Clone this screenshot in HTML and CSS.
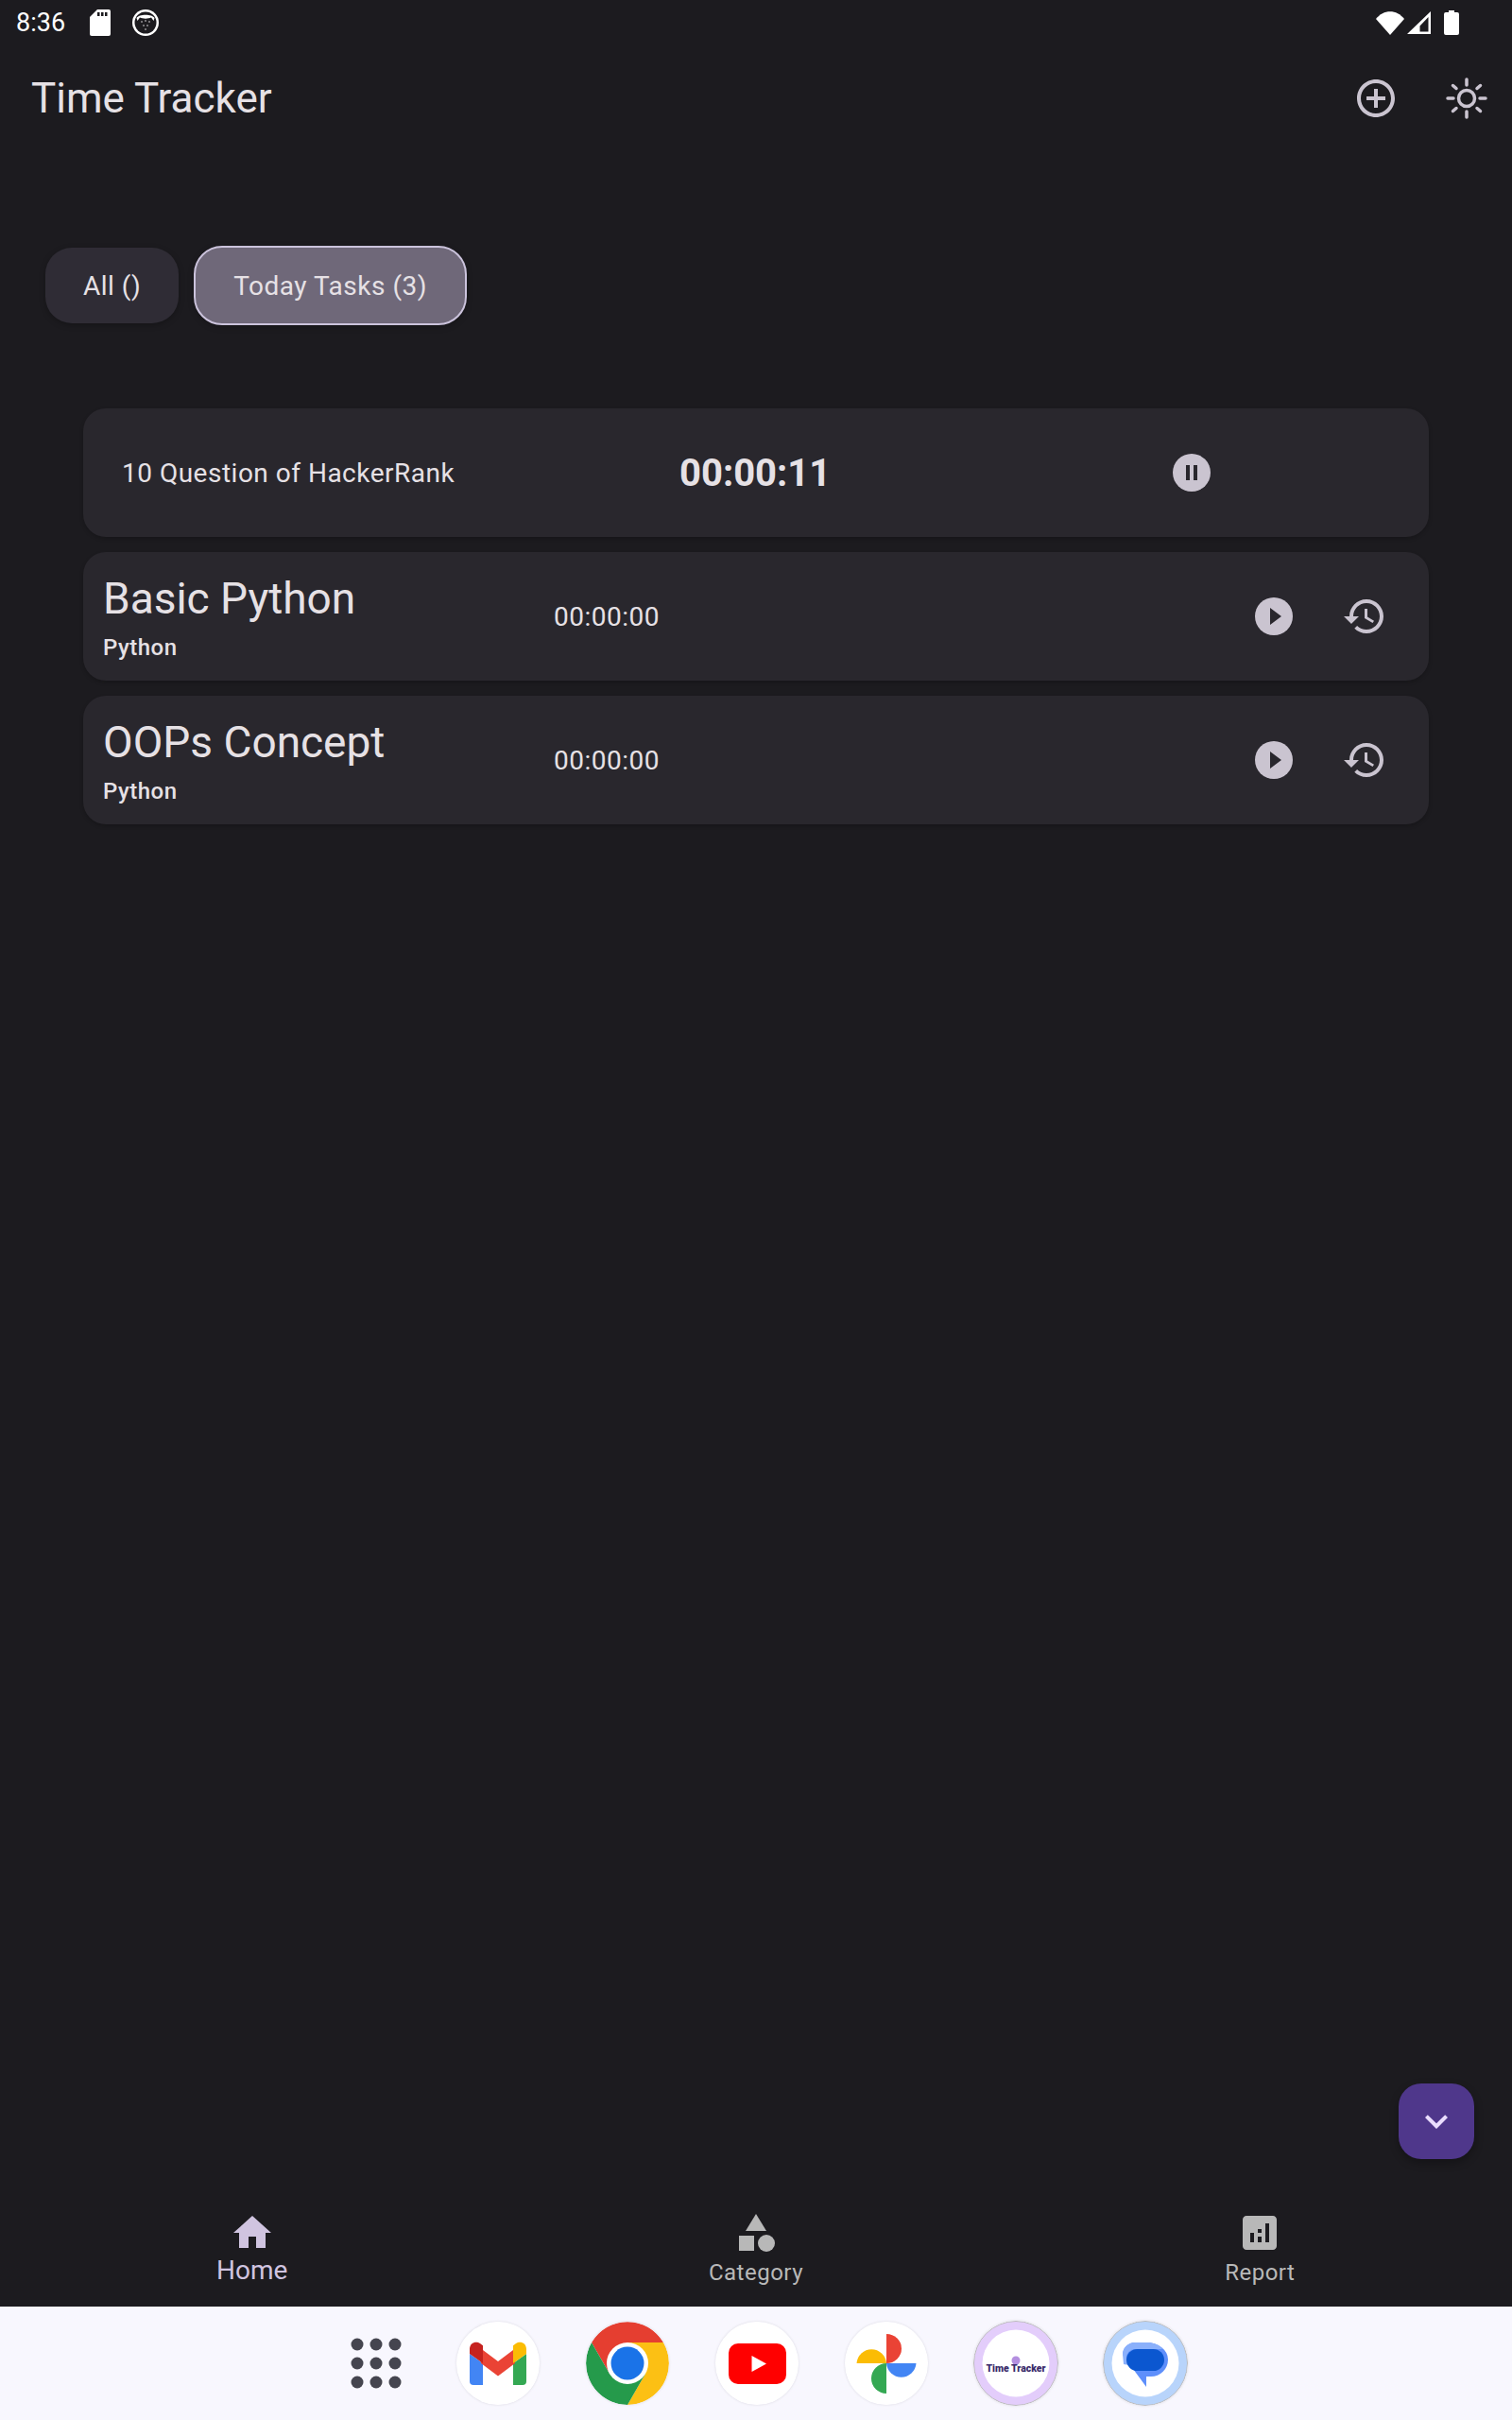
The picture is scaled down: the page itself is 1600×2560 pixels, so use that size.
FILE: index.html
```html
<!DOCTYPE html>
<html lang="en">
<head>
<meta charset="utf-8">
<title>Time Tracker</title>
<link rel="stylesheet" href="styles.css">
</head>
<body>
<div class="app">
  <div class="statusbar">
    <span class="clock">8:36</span>
    <svg class="sb-sd" width="22" height="28" viewBox="0 0 22 28"><path fill="#fff" d="M8 0h12a2 2 0 0 1 2 2v24a2 2 0 0 1-2 2H2a2 2 0 0 1-2-2V8z"/><path fill="#1c1b1f" d="M8 3h2.5v4H8zM12 3h2.500v4H12zM16 3h2.500v4H16z"/></svg>
    <svg class="sb-face" width="28" height="28" viewBox="0 0 28 28"><circle cx="14" cy="14" r="14" fill="#fff"/><circle cx="14" cy="14" r="11.500" fill="#1c1b1f"/><path fill="#fff" d="M4.500 9C7 4.500 21 4.500 23.500 9l-1 3-2.500-3.500c-3 1.500-9 1.500-12 0L5.500 12z"/><g fill="#e6e1e5"><circle cx="10" cy="13" r=".8"/><circle cx="14" cy="12" r=".8"/><circle cx="18" cy="13" r=".8"/><circle cx="12" cy="17" r=".8"/><circle cx="16" cy="17" r=".8"/><circle cx="14" cy="21" r=".8"/></g></svg>
    <span class="sb-spacer"></span>
    <svg class="sb-wifi" width="30" height="25" viewBox="0 0 30 25"><path fill="#fff" d="M0 8C8-2.500 22-2.500 30 8L15 25z"/></svg>
    <svg class="sb-cell" width="25" height="24" viewBox="0 0 25 24"><path fill="#fff" fill-rule="evenodd" d="M25 0v24H0zM22.500 6l-9 9.500v6h9z"/></svg>
    <svg class="sb-batt" width="16" height="26" viewBox="0 0 16 26"><path fill="#fff" d="M5 0h6v2h3a2 2 0 0 1 2 2v20a2 2 0 0 1-2 2H2a2 2 0 0 1-2-2V4a2 2 0 0 1 2-2h3z"/></svg>
  </div>

  <header class="appbar">
    <h1 class="app-title">Time Tracker</h1>
    <div class="app-actions">
      <svg class="icon48" viewBox="0 0 24 24"><path fill="#cac4d0" d="M13 7h-2v4H7v2h4v4h2v-4h4v-2h-4V7zm-1-5C6.480 2 2 6.480 2 12s4.480 10 10 10 10-4.480 10-10S17.520 2 12 2zm0 18c-4.410 0-8-3.590-8-8s3.590-8 8-8 8 3.590 8 8-3.590 8-8 8z"/></svg>
      <svg class="icon48" viewBox="0 0 48 48"><g fill="none" stroke="#cac4d0" stroke-width="3.500" stroke-linecap="round"><circle cx="24" cy="24" r="8.500"/><path d="M24 4v6M24 38v6M4 24h6M38 24h6M9.500 10.500l3.500 3M35 34.500l3.500 3M38.500 10.500l-3.500 3M13 34.500l-3.500 3"/></g></svg>
    </div>
  </header>

  <main class="content">
    <div class="chips">
      <button class="chip">All ()</button>
      <button class="chip chip-active">Today Tasks (3)</button>
    </div>

    <div class="cards">
      <section class="card card-running">
        <span class="running-name">10 Question of HackerRank</span>
        <span class="running-time">00:00:11</span>
        <svg class="icon48" viewBox="0 0 24 24"><circle cx="12" cy="12" r="10" fill="#cac4d0"/><path fill="#29272d" d="M9 16h2V8H9zm4 0h2V8h-2z"/></svg>
      </section>

      <section class="card card-task">
        <div class="task-info">
          <div class="task-name">Basic Python</div>
          <div class="task-cat">Python</div>
        </div>
        <span class="task-time">00:00:00</span>
        <div class="task-actions">
          <svg class="icon48" viewBox="0 0 24 24"><circle cx="12" cy="12" r="10" fill="#cac4d0"/><path fill="#29272d" d="M10 16.500l6-4.500-6-4.500z"/></svg>
          <svg class="icon48" viewBox="0 0 24 24"><path fill="#cac4d0" d="M13 3c-4.970 0-9 4.030-9 9H1l3.890 3.890.070.140L9 12H6c0-3.870 3.130-7 7-7s7 3.130 7 7-3.130 7-7 7c-1.930 0-3.680-.790-4.940-2.060l-1.420 1.420C8.270 19.990 10.510 21 13 21c4.970 0 9-4.030 9-9s-4.030-9-9-9zm-1 5v5l4.280 2.540.720-1.210-3.500-2.080V8H12z"/></svg>
        </div>
      </section>

      <section class="card card-task">
        <div class="task-info">
          <div class="task-name">OOPs Concept</div>
          <div class="task-cat">Python</div>
        </div>
        <span class="task-time">00:00:00</span>
        <div class="task-actions">
          <svg class="icon48" viewBox="0 0 24 24"><circle cx="12" cy="12" r="10" fill="#cac4d0"/><path fill="#29272d" d="M10 16.500l6-4.500-6-4.500z"/></svg>
          <svg class="icon48" viewBox="0 0 24 24"><path fill="#cac4d0" d="M13 3c-4.970 0-9 4.030-9 9H1l3.890 3.890.070.140L9 12H6c0-3.870 3.130-7 7-7s7 3.130 7 7-3.130 7-7 7c-1.930 0-3.680-.790-4.940-2.060l-1.420 1.420C8.270 19.990 10.510 21 13 21c4.970 0 9-4.030 9-9s-4.030-9-9-9zm-1 5v5l4.280 2.540.720-1.210-3.500-2.080V8H12z"/></svg>
        </div>
      </section>
    </div>

    <button class="fab">
      <svg class="icon48" viewBox="0 0 24 24"><path fill="#eaddff" d="M16.590 8.590L12 13.170 7.410 8.590 6 10l6 6 6-6z"/></svg>
    </button>
  </main>

  <nav class="bottomnav">
    <div class="nav-item nav-active">
      <svg class="icon48" viewBox="0 0 24 24"><path fill="#d0c4e0" d="M10 20v-6h4v6h5v-8h3L12 3 2 12h3v8z"/></svg>
      <span class="nav-label">Home</span>
    </div>
    <div class="nav-item">
      <svg class="icon48" viewBox="0 0 24 24"><path fill="#b8b8b8" d="M12 2l-5.500 9h11z"/><circle cx="17.500" cy="17.500" r="4.500" fill="#b8b8b8"/><path fill="#b8b8b8" d="M3 13.500h8v8H3z"/></svg>
      <span class="nav-label">Category</span>
    </div>
    <div class="nav-item">
      <svg class="icon48" viewBox="0 0 24 24"><path fill="#b8b8b8" d="M19 3H5c-1.100 0-2 .9-2 2v14c0 1.100.9 2 2 2h14c1.100 0 2-.9 2-2V5c0-1.100-.9-2-2-2zM9 17H7v-5h2v5zm4 0h-2v-3h2v3zm0-5h-2v-2h2v2zm4 5h-2V7h2v10z"/></svg>
      <span class="nav-label">Report</span>
    </div>
  </nav>

  <footer class="dock">
    <div class="dock-drawer">
      <svg width="54" height="54" viewBox="0 0 54 54"><g fill="#45454f"><circle cx="7" cy="7" r="6.500"/><circle cx="27" cy="7" r="6.500"/><circle cx="47" cy="7" r="6.500"/><circle cx="7" cy="27" r="6.500"/><circle cx="27" cy="27" r="6.500"/><circle cx="47" cy="27" r="6.500"/><circle cx="7" cy="47" r="6.500"/><circle cx="27" cy="47" r="6.500"/><circle cx="47" cy="47" r="6.500"/></g></svg>
    </div>
    <div class="dock-slot">
      <svg class="dock-icon" viewBox="0 0 88 88"><circle cx="44" cy="44" r="44" fill="#fff"/>
        <path fill="#4285f4" d="M14 34v29a4 4 0 0 0 4 4h10V44z"/>
        <path fill="#34a853" d="M74 34v29a4 4 0 0 1-4 4H60V44z"/>
        <path fill="#ea4335" d="M28 30l16 12 16-12 2-4 0 18-18 13.500L26 44l-2-14z"/>
        <path fill="#c5221f" d="M14 29c0-7 7-9 11-6l3 2.200V44L14 34z"/>
        <path fill="#fbbc04" d="M74 29c0-7-7-9-11-6l-3 2.200V44l14-10z"/>
      </svg>
    </div>
    <div class="dock-slot">
      <svg class="dock-icon" viewBox="0 0 88 88">
        <path fill="#e53e30" d="M6 22A44 44 0 0 1 82 22H44L25 55z"/>
        <path fill="#fcc014" d="M82 22A44 44 0 0 1 44 88L63 55 44 22z"/>
        <path fill="#259a4b" d="M44 88A44 44 0 0 1 6 22L25 55H63z"/>
        <circle cx="44" cy="44" r="22" fill="#fff"/><circle cx="44" cy="44" r="17.500" fill="#1a73e8"/>
      </svg>
    </div>
    <div class="dock-slot">
      <svg class="dock-icon" viewBox="0 0 88 88"><circle cx="44" cy="44" r="44" fill="#fff"/><rect x="14" y="23" width="61" height="43" rx="10" fill="#f00"/><path fill="#fff" d="M38.500 36v17L54 44.500z"/></svg>
    </div>
    <div class="dock-slot">
      <svg class="dock-icon" viewBox="0 0 88 88"><circle cx="44" cy="44" r="44" fill="#fff"/>
        <path fill="#ea4335" d="M44 13a16 15.500 0 0 1 0 31z"/>
        <path fill="#4285f4" d="M44 44h31.500a15.800 16 0 0 1-31.500 0z"/>
        <path fill="#34a853" d="M44 44v32a16 16 0 0 1 0-32z"/>
        <path fill="#fbbc04" d="M44 44H12.500a15.800 16 0 0 1 31.500 0z"/>
      </svg>
    </div>
    <div class="dock-slot">
      <svg class="dock-icon dock-ring" viewBox="0 0 90 90"><circle cx="45" cy="45" r="44.500" fill="#e3cdfb" stroke="#bbb" stroke-width="1"/><circle cx="45" cy="45" r="35.500" fill="#fff"/><circle cx="45" cy="42" r="4.500" fill="#b48fe0"/><text class="tt-logo" x="45" y="54" text-anchor="middle">Time Tracker</text></svg>
    </div>
    <div class="dock-slot">
      <svg class="dock-icon dock-ring" viewBox="0 0 90 90"><circle cx="45" cy="45" r="44.500" fill="#b8d4fb" stroke="#bbb" stroke-width="1"/><circle cx="45" cy="45" r="35.500" fill="#fff"/>
        <path fill="#5e8ffb" d="M21 36a13 13 0 0 1 13-13h12a23 18 0 0 1 23 18 18 18 0 0 1-18 18h-5v11z"/>
        <path fill="#8ab0fb" d="M22 46l-1-10a13 13 0 0 1 13-13h12c7 0 14 2 17 7H34a9 9 0 0 0-9 9c0 4 1 6 3 8z"/>
        <rect x="25" y="30" width="40" height="23" rx="11.500" fill="#0b57d0"/>
      </svg>
    </div>
  </footer>
</div>
</body>
</html>
```

FILE: styles.css
```css
* {
  box-sizing: border-box;
}

html,
body {
  margin: 0;
  padding: 0;
}

body {
  background: #1c1b1f;
  font-family: Roboto, "Liberation Sans", sans-serif;
  color: #e6e1e5;
}

.app {
  display: flex;
  flex-direction: column;
  width: 1600px;
  height: 2560px;
  overflow: hidden;
}

svg {
  display: block;
  flex: none;
}

.icon48 {
  width: 48px;
  height: 48px;
}

/* Status bar */
.statusbar {
  display: flex;
  align-items: center;
  height: 50px;
  padding-left: 17px;
  padding-bottom: 2px;
}

.clock {
  width: 78px;
  font-size: 27px;
  color: #fff;
}

.sb-face {
  margin-left: 23px;
}

.sb-spacer {
  flex: 1;
}

.sb-wifi {
  margin-right: 3px;
}

.sb-batt {
  margin-left: 14px;
  margin-right: 56px;
}

/* App bar */
.appbar {
  display: flex;
  align-items: center;
  justify-content: space-between;
  height: 108px;
  padding: 0 24px 0 33px;
}

.app-title {
  margin: 0;
  font-size: 44px;
  font-weight: 400;
  color: #e6e1e5;
}

.app-actions {
  display: flex;
  gap: 48px;
}

/* Content */
.content {
  position: relative;
  flex: 1;
  min-height: 0;
}

.chips {
  display: flex;
  align-items: center;
  gap: 16px;
  height: 84px;
  margin-top: 102px;
  padding-left: 48px;
}

.chip {
  height: 80px;
  padding: 0 40px;
  border: 0;
  border-radius: 28px;
  background: #2f2c35;
  color: #e6e1e5;
  font-family: inherit;
  font-size: 28px;
  letter-spacing: 0.5px;
  box-shadow: 0 2px 6px rgba(0, 0, 0, 0.25);
}

.chip-active {
  height: 84px;
  border: 2.5px solid #cbc3dc;
  border-radius: 30px;
  background: #6f6879;
}

.cards {
  display: flex;
  flex-direction: column;
  gap: 16px;
  margin: 88px 88px 0;
}

.card {
  display: grid;
  align-items: center;
  height: 136px;
  border-radius: 24px;
  background: #29272d;
  box-shadow: 0 2px 4px rgba(0, 0, 0, 0.2);
}

.card-running {
  grid-template-columns: 590px 518px 48px;
  padding-left: 41px;
}

.running-name {
  font-size: 28px;
  letter-spacing: 0.5px;
}

.running-time {
  font-size: 40px;
  font-weight: 700;
}

.card-task {
  grid-template-columns: 477px 1fr auto;
  padding: 0 44px 0 21px;
}

.task-name {
  font-size: 46px;
  line-height: 60px;
}

.task-cat {
  margin-top: 6px;
  font-size: 24px;
  font-weight: 500;
  line-height: 32px;
  letter-spacing: 0.5px;
}

.task-time {
  font-size: 28px;
  letter-spacing: 0.5px;
}

.task-actions {
  display: flex;
  gap: 48px;
}

.fab {
  position: absolute;
  right: 40px;
  bottom: 46px;
  display: flex;
  align-items: center;
  justify-content: center;
  width: 80px;
  height: 80px;
  padding: 0;
  border: 0;
  border-radius: 24px;
  background: #4f378b;
  box-shadow: 0 4px 10px rgba(0, 0, 0, 0.3);
}

/* Bottom navigation */
.bottomnav {
  display: grid;
  grid-template-columns: repeat(3, 1fr);
  height: 110px;
  padding-top: 8px;
}

.nav-item {
  display: flex;
  flex-direction: column;
  align-items: center;
  color: #b8b8b8;
}

.nav-label {
  margin-top: 2px;
  font-size: 24px;
  line-height: 32px;
  letter-spacing: 0.5px;
}

.nav-active {
  color: #d0c4e0;
}

.nav-active .nav-label {
  margin-top: 0;
  font-size: 28px;
  letter-spacing: 0;
}

/* Launcher dock */
.dock {
  display: flex;
  align-items: center;
  flex: none;
  height: 120px;
  padding-left: 338px;
  background: #f8f7fe;
}

.dock-drawer {
  display: flex;
  justify-content: center;
  width: 120px;
  padding-right: 0;
}

.dock-slot {
  display: flex;
  justify-content: center;
  width: 137px;
}

.dock-icon {
  width: 88px;
  height: 88px;
  border-radius: 50%;
  box-shadow: 0 0 3px rgba(0, 0, 0, 0.12);
}

.dock-ring {
  width: 90px;
  height: 90px;
}

.tt-logo {
  font-family: Roboto, "Liberation Sans", sans-serif;
  font-size: 10.5px;
  font-weight: 900;
  fill: #3a2a6a;
}
```
